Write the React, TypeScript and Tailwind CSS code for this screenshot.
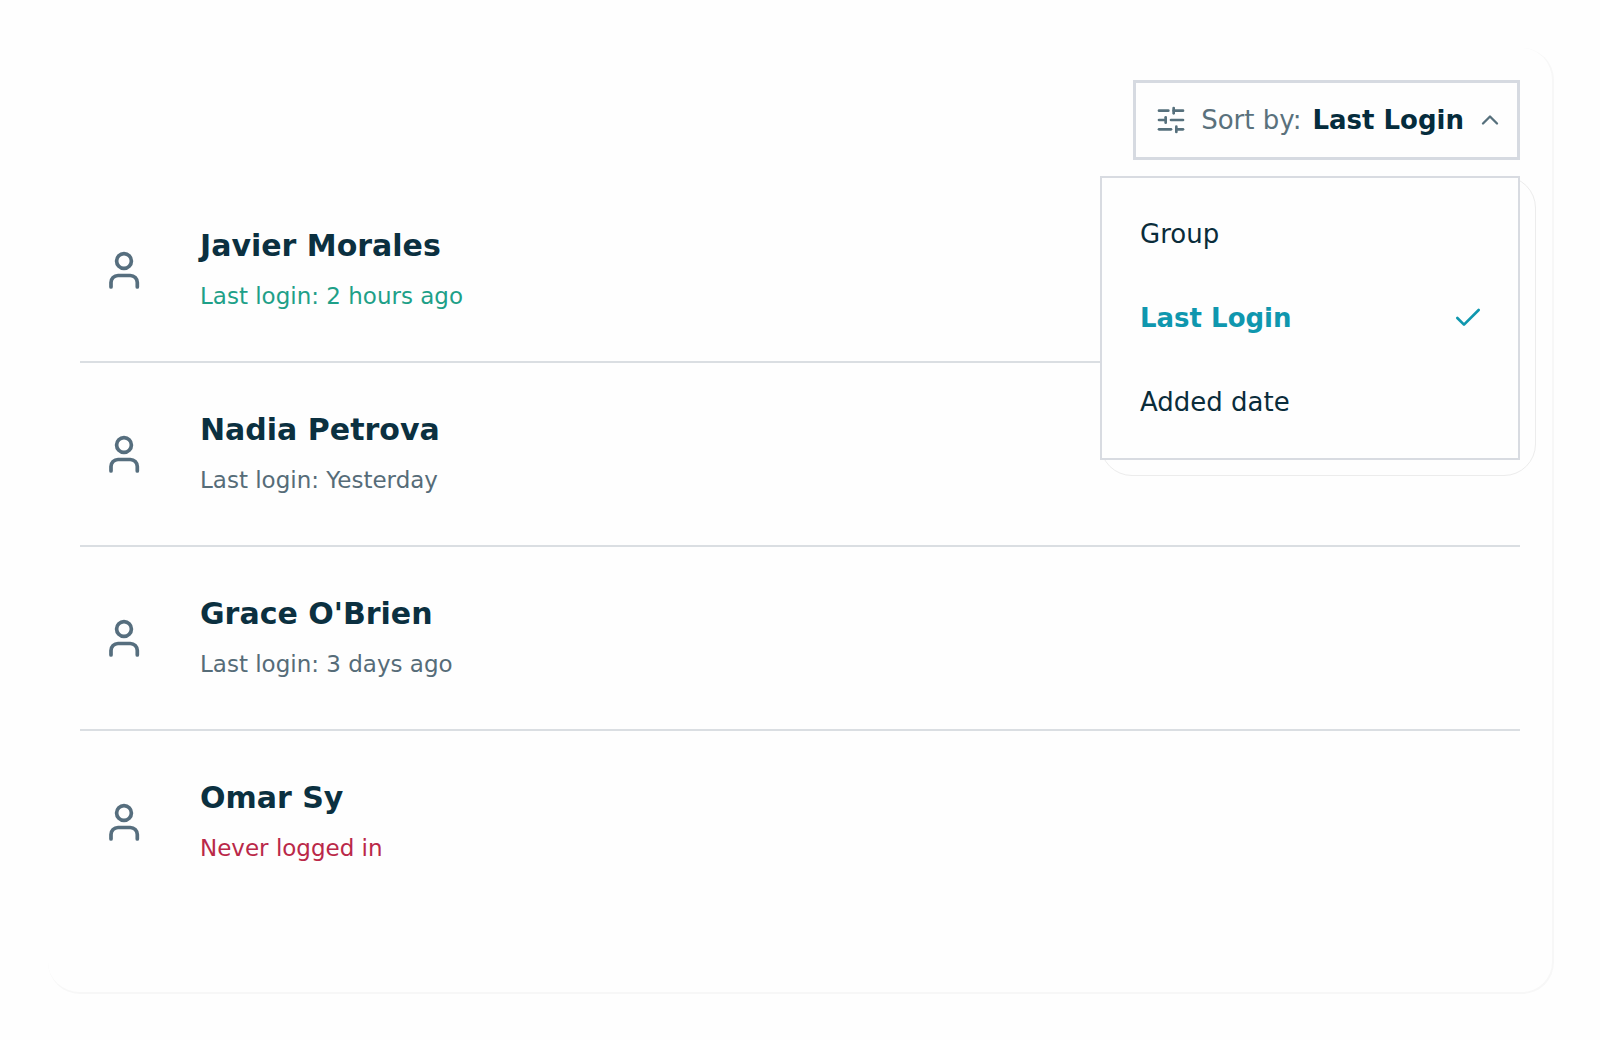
import { useState } from "react";
import { Check, ChevronDown, ChevronUp, SlidersHorizontal } from "lucide-react";

const users = [
  { name: "Javier Morales", status: "Last login: 2 hours ago", tone: "text-[#1ea088]" },
  { name: "Nadia Petrova", status: "Last login: Yesterday", tone: "text-[#566c78]" },
  { name: "Grace O'Brien", status: "Last login: 3 days ago", tone: "text-[#566c78]" },
  { name: "Omar Sy", status: "Never logged in", tone: "text-[#ba2848]" },
];

const options = ["Group", "Last Login", "Added date"];

function UserIcon() {
  return (
    <svg
      viewBox="0 0 40 40"
      className="size-10 shrink-0 text-[#566e7e]"
      fill="none"
      stroke="currentColor"
      strokeWidth="3.7"
      strokeLinecap="round"
      aria-hidden="true"
    >
      <circle cx="20" cy="11" r="7.4" />
      <path d="M7 37v-4.5a7 7 0 0 1 7-7h12.3a7 7 0 0 1 7 7V37" />
    </svg>
  );
}

export default function App() {
  const [open, setOpen] = useState(true);
  const [sort, setSort] = useState("Last Login");

  return (
    <div className="flex min-h-screen flex-col bg-[#fefefe] pt-12 pr-[46px] pb-[46px] pl-12 font-['DejaVu_Sans',sans-serif]">
      <main className="grow rounded-[32px] border-r-2 border-b-2 border-[#f7f7f7] bg-[#fefefe] px-8 pt-8">
        <div className="relative flex justify-end">
          <button
            type="button"
            aria-haspopup="listbox"
            aria-expanded={open}
            onClick={() => setOpen(!open)}
            className="flex h-20 items-center border-3 border-[#d6dae1] pr-[13px] pl-[19px] text-[26px] leading-8"
          >
            <SlidersHorizontal size={32} className="mr-3.5 text-[#56707c]" />
            <span className="mr-[11px] text-[#5a717c]">Sort by:</span>
            <span className="mr-3 font-bold text-[#052c3c]">{sort}</span>
            {open ? (
              <ChevronUp size={28} className="text-[#56707c]" />
            ) : (
              <ChevronDown size={28} className="text-[#56707c]" />
            )}
          </button>
          {open && (
            <div className="absolute top-24 right-0 z-10 w-[420px]">
              <div className="absolute inset-y-0 left-0 -right-4 -bottom-4 rounded-[32px] border border-[#ececec] bg-[#fefefe]" />
              <ul role="listbox" aria-label="Sort by" className="relative border-2 border-[#d8dbe1] bg-[#fefefe] py-3.5">
                {options.map((option) => (
                  <li key={option} role="option" aria-selected={option === sort}>
                    <button
                      type="button"
                      onClick={() => setSort(option)}
                      className={
                        option === sort
                          ? "flex h-21 w-full items-center justify-between pr-[34px] pl-[38px] text-left text-[26px] leading-8 font-bold text-[#0f97ae]"
                          : "flex h-21 w-full items-center justify-between pr-[34px] pl-[38px] text-left text-[26px] leading-8 text-[#0a2c3a]"
                      }
                    >
                      {option}
                      {option === sort && <Check size={32} />}
                    </button>
                  </li>
                ))}
              </ul>
            </div>
          )}
        </div>
        <ul className="mt-[19px]">
          {users.map((user) => (
            <li
              key={user.name}
              className="flex h-[184px] items-center gap-14 border-b-2 border-[#dadee2] pl-6 last:border-transparent"
            >
              <UserIcon />
              <div className="flex flex-col gap-3.5 pb-0.5">
                <h2 className="text-[30px] leading-10 font-bold text-[#0b3040]">{user.name}</h2>
                <p className={`text-[23px] leading-8 ${user.tone}`}>{user.status}</p>
              </div>
            </li>
          ))}
        </ul>
      </main>
    </div>
  );
}
